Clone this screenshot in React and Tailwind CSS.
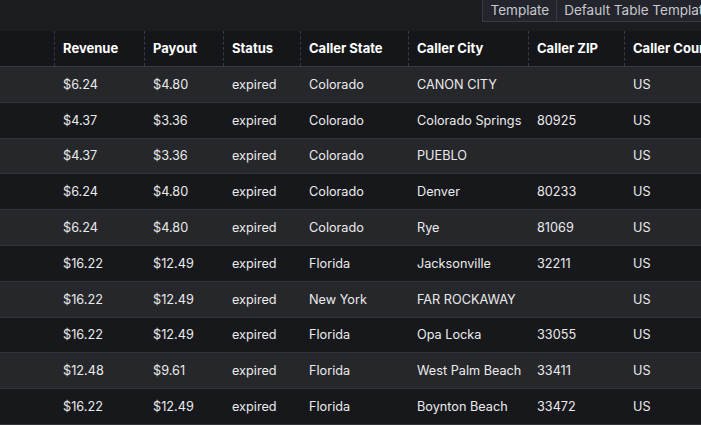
import React from "react";

const rows = [
  ["$6.24", "$4.80", "expired", "Colorado", "CANON CITY", "", "US"],
  ["$4.37", "$3.36", "expired", "Colorado", "Colorado Springs", "80925", "US"],
  ["$4.37", "$3.36", "expired", "Colorado", "PUEBLO", "", "US"],
  ["$6.24", "$4.80", "expired", "Colorado", "Denver", "80233", "US"],
  ["$6.24", "$4.80", "expired", "Colorado", "Rye", "81069", "US"],
  ["$16.22", "$12.49", "expired", "Florida", "Jacksonville", "32211", "US"],
  ["$16.22", "$12.49", "expired", "New York", "FAR ROCKAWAY", "", "US"],
  ["$16.22", "$12.49", "expired", "Florida", "Opa Locka", "33055", "US"],
  ["$12.48", "$9.61", "expired", "Florida", "West Palm Beach", "33411", "US"],
  ["$16.22", "$12.49", "expired", "Florida", "Boynton Beach", "33472", "US"],
];

const headers = ["Revenue", "Payout", "Status", "Caller State", "Caller City", "Caller ZIP", "Caller Country"];
const grid = "grid grid-cols-[54px_90px_79px_77px_108px_120px_96px_120px]";

export default function App() {
  return (
    <div
      className="w-[701px] h-[425px] overflow-hidden bg-[#18191c] text-[13px] text-[#ebebed]"
      style={{ fontFamily: "Inter, 'Noto Sans', sans-serif" }}
    >
      <div className="h-[31px] bg-[#1c1d21] flex justify-end items-start overflow-hidden">
        <div className="flex shrink-0 h-[22px] -mr-[12px] border-l border-b border-[#383943] bg-[#24252c] text-[13.5px] text-[#c8c9cf] whitespace-nowrap">
          <div className="pl-[8px] pr-[7px] flex items-center border-r border-[#383943]">Template</div>
          <div className="pl-[7px] pr-[2px] flex items-center">Default Table Template</div>
        </div>
      </div>
      <div className={`${grid} h-[36px] bg-[#151619] border-b border-[#383940] font-bold text-white whitespace-nowrap`}>
        <div></div>
        {headers.map((h) => (
          <div key={h} className="border-l border-dashed border-[#3a3b42] pl-[8px] flex items-center">
            {h}
          </div>
        ))}
      </div>
      {rows.map((r, i) => (
        <div
          key={i}
          className={`${grid} h-[35.8px] border-b border-[#33343b] whitespace-nowrap text-[12.7px] ${i % 2 === 0 ? "bg-[#26272b]" : "bg-[#17181b]"}`}
        >
          <div></div>
          {r.map((c, j) => (
            <div key={j} className="pl-[9px] flex items-center">
              {c}
            </div>
          ))}
        </div>
      ))}
    </div>
  );
}
